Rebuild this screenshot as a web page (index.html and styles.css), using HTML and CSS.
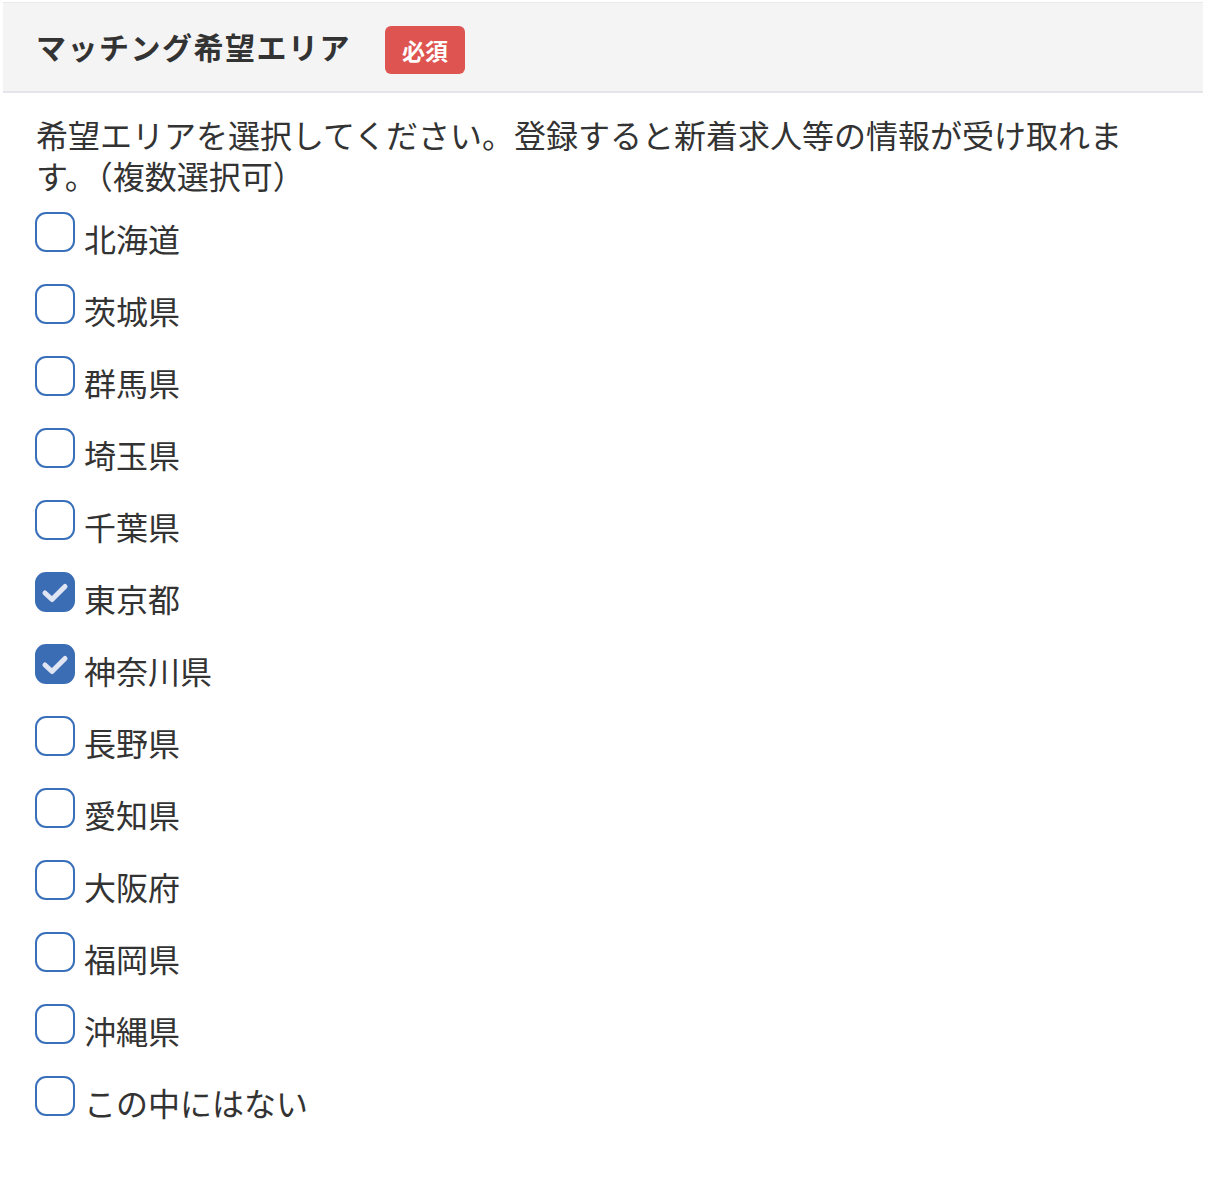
FILE: index.html
```html
<!DOCTYPE html>
<html lang="ja">
<head>
    <meta charset="UTF-8">
    <meta name="viewport" content="width=device-width, initial-scale=1.0">
    <title>マッチング希望エリア</title>
    <link rel="stylesheet" href="styles.css">
</head>
<body>
    <div class="AreaForm">
        <div class="formHeader">
            <h2 class="formTitle">マッチング希望エリア</h2>
            <span class="badgeRequired">必須</span>
        </div>
        <div class="formBody">
            <p class="formDesc">希望エリアを選択してください。登録すると新着求人等の情報が受け取れます。（複数選択可）</p>
            <ul class="areaList">
                <li><label class="areaItem"><input type="checkbox" name="area"><span class="box"></span><span class="name">北海道</span></label></li>
                <li><label class="areaItem"><input type="checkbox" name="area"><span class="box"></span><span class="name">茨城県</span></label></li>
                <li><label class="areaItem"><input type="checkbox" name="area"><span class="box"></span><span class="name">群馬県</span></label></li>
                <li><label class="areaItem"><input type="checkbox" name="area"><span class="box"></span><span class="name">埼玉県</span></label></li>
                <li><label class="areaItem"><input type="checkbox" name="area"><span class="box"></span><span class="name">千葉県</span></label></li>
                <li><label class="areaItem"><input type="checkbox" name="area" checked><span class="box"><svg viewBox="0 0 36 36"><path d="M8 19 L15 25.5 L28 12.5"/></svg></span><span class="name">東京都</span></label></li>
                <li><label class="areaItem"><input type="checkbox" name="area" checked><span class="box"><svg viewBox="0 0 36 36"><path d="M8 19 L15 25.5 L28 12.5"/></svg></span><span class="name">神奈川県</span></label></li>
                <li><label class="areaItem"><input type="checkbox" name="area"><span class="box"></span><span class="name">長野県</span></label></li>
                <li><label class="areaItem"><input type="checkbox" name="area"><span class="box"></span><span class="name">愛知県</span></label></li>
                <li><label class="areaItem"><input type="checkbox" name="area"><span class="box"></span><span class="name">大阪府</span></label></li>
                <li><label class="areaItem"><input type="checkbox" name="area"><span class="box"></span><span class="name">福岡県</span></label></li>
                <li><label class="areaItem"><input type="checkbox" name="area"><span class="box"></span><span class="name">沖縄県</span></label></li>
                <li><label class="areaItem"><input type="checkbox" name="area"><span class="box"></span><span class="name">この中にはない</span></label></li>
            </ul>
        </div>
    </div>
</body>
</html>
```

FILE: styles.css
```css
*{margin:0;padding:0;box-sizing:border-box;}
html,body{
    background:#fff;
    font-family:"Noto Sans CJK JP","Noto Sans",sans-serif;
    color:#333;
}

.AreaForm{
    padding:2px 9px 0 3px;
}

.formHeader{
    display:flex;
    align-items:center;
    height:91px;
    padding:0 33px;
    background:#f4f4f4;
    border-top:1px solid #e9e9e9;
    border-bottom:2px solid #e4e4ea;
}

.formTitle{
    font-size:30px;
    font-weight:700;
    letter-spacing:1.5px;
    color:#333;
    line-height:1;
    margin-bottom:3px;
}

.badgeRequired{
    display:inline-flex;
    align-items:center;
    justify-content:center;
    margin:6px 0 0 34px;
    width:80px; height:48px;
    border-radius:6px;
    background:#de5450;
    color:#fff;
    font-size:23px;
    font-weight:700;
    line-height:1;
}

.formBody{
    padding:21px 34px 0 33px;
}

.formDesc{
    width:1100px;
    font-size:32px;
    line-height:41px;
    margin-bottom:16px;
}

.areaList{
    list-style:none;
    margin-left:-1px;
}

.areaItem{
    display:flex;
    align-items:flex-start;
    height:72px;
    cursor:pointer;
}

.areaItem input{
    display:none;
}

.box{
    flex:none;
    width:40px; height:40px;
    border:2px solid #3a70b9;
    border-radius:11px;
    background:#fff;
}

.box svg{
    display:block;
    width:36px; height:36px;
}

.box path{
    fill:none;
    stroke:#dfe5f2;
    stroke-width:5;
    stroke-linecap:round;
    stroke-linejoin:round;
}

.areaItem input:checked + .box{
    background:#3b6db5;
    border-color:#3b6db5;
}

.name{
    margin-left:9px;
    font-size:32px;
    line-height:52px;
    color:#333;
}
```
